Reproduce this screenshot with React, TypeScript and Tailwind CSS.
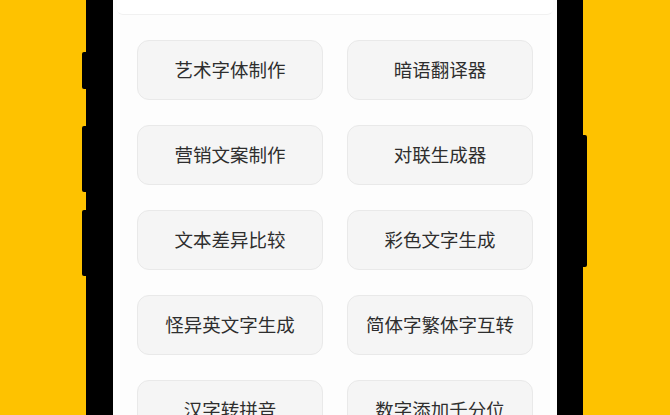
import React from "react";

const items = [
  "艺术字体制作",
  "暗语翻译器",
  "营销文案制作",
  "对联生成器",
  "文本差异比较",
  "彩色文字生成",
  "怪异英文字生成",
  "简体字繁体字互转",
  "汉字转拼音",
  "数字添加千分位",
];

export default function App() {
  return (
    <div
      className="w-[670px] h-[415px] bg-[#FEC200] overflow-hidden flex"
      style={{ fontFamily: '"Noto Sans CJK SC", "Noto Sans", sans-serif' }}
    >
      <div className="relative ml-[86px] w-[497px] h-[460px] bg-black border-l-[27px] border-r-[26px] border-black">
        <div className="absolute left-[-31px] top-[52px] w-[5px] h-[37px] bg-black rounded-l-[2px]" />
        <div className="absolute left-[-31px] top-[126px] w-[5px] h-[66px] bg-black rounded-l-[2px]" />
        <div className="absolute left-[-31px] top-[210px] w-[5px] h-[66px] bg-black rounded-l-[2px]" />
        <div className="absolute right-[-30px] top-[135px] w-[5px] h-[132px] bg-black rounded-r-[2px]" />
        <div className="w-[444px] h-full bg-[#fdfdfd] flex flex-col">
          <div className="mx-[4px] h-[15px] bg-white rounded-b-[6px] border-b border-[#f1f1f1]" />
          <div className="grid grid-cols-2 gap-x-[24px] gap-y-[25px] px-[24px] pt-[25px]">
            {items.map((t) => (
              <div
                key={t}
                className="h-[60px] rounded-[12px] bg-[#f5f5f5] border border-[#e9e9e9] flex items-center justify-center text-[18.5px] text-[#2e2e2e]"
              >
                {t}
              </div>
            ))}
          </div>
        </div>
      </div>
    </div>
  );
}
